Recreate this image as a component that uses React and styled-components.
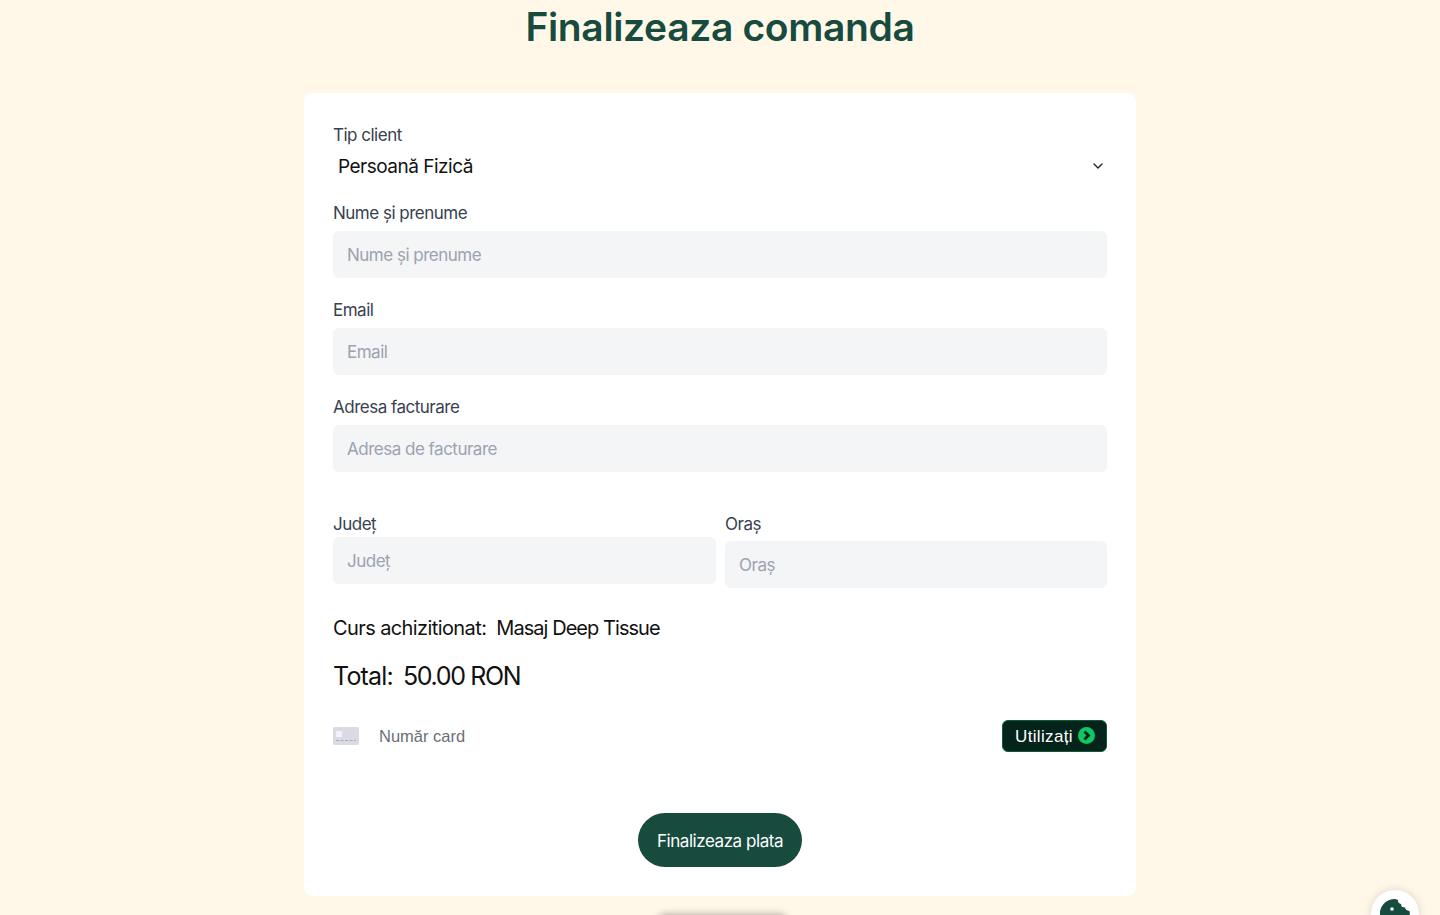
import React from 'react';
import styled, { createGlobalStyle } from 'styled-components';
import { ChevronDown } from 'lucide-react';

const GlobalStyle = createGlobalStyle`
  html, body {
    margin: 0;
    height: 100%;
    overflow: hidden;
    background: #fff8e9;
  }
  * {
    box-sizing: border-box;
  }
  body {
    font-family: Inter, "Noto Sans", sans-serif;
  }
`;

const Page = styled.div`
  height: 915px;
  overflow: hidden;
  position: relative;
  display: flex;
  flex-direction: column;
  align-items: center;
`;

const Title = styled.h1`
  margin: 0;
  height: 93px;
  padding-top: 3px;
  font-size: 39px;
  line-height: 48px;
  font-weight: 600;
  letter-spacing: -0.35px;
  color: #164b3e;
`;

const Card = styled.form`
  width: 832px;
  height: 803px;
  flex-shrink: 0;
  padding: 29px 29px 0;
  background: #fff;
  border-radius: 8px;
  display: flex;
  flex-direction: column;
`;

const Label = styled.label`
  display: block;
  height: 26px;
  font-size: 17px;
  line-height: 26px;
  letter-spacing: -0.5px;
  color: #374151;
`;

const SelectRow = styled.div`
  height: 36px;
  padding: 0 1px 0 5px;
  display: flex;
  align-items: center;
  justify-content: space-between;
  font-size: 19px;
  letter-spacing: -0.5px;
  color: #111;
  margin-bottom: 16px;

  svg {
    color: #222;
  }
`;

const Field = styled.div`
  margin-bottom: 19px;

  ${Label} {
    margin-bottom: 5px;
  }
`;

const Input = styled.input`
  display: block;
  width: 100%;
  height: 47px;
  padding: 0 14px;
  border: 0;
  border-radius: 6px;
  background: #f3f5f6;
  font-family: inherit;
  font-size: 17px;
  letter-spacing: -0.5px;
  outline: none;

  &::placeholder {
    color: #9ca3af;
    opacity: 1;
  }
`;

const Columns = styled.div`
  display: grid;
  grid-template-columns: 383px 382px;
  gap: 9px;
  margin-top: 20px;
`;

const ShiftedInput = styled(Input)`
  margin-top: ${(props) => props.$offset || 0}px;
`;

const CourseLine = styled.div`
  margin-top: 26px;
  display: flex;
  gap: 10px;
  font-size: 20px;
  line-height: 28px;
  letter-spacing: -0.6px;
  color: #111;
`;

const CourseName = styled.span`
  letter-spacing: -0.95px;
`;

const TotalLine = styled.div`
  margin-top: 17px;
  display: flex;
  gap: 10px;
  font-size: 25px;
  line-height: 34px;
  letter-spacing: -0.8px;
  color: #111;
`;

const TotalValue = styled.span`
  letter-spacing: -1.35px;
`;

const PaymentRow = styled.div`
  margin-top: 26px;
  height: 34px;
  display: flex;
  align-items: center;
  gap: 20px;
`;

const CardNumber = styled.span`
  flex: 1;
  font-family: "Liberation Sans", Arial, sans-serif;
  font-size: 16.5px;
  color: #6b6f76;
`;

const UseButton = styled.button`
  width: 105px;
  height: 32px;
  padding: 1px 0 0 12px;
  display: flex;
  align-items: center;
  gap: 5px;
  border: 1px solid #0b5a3a;
  border-radius: 6px;
  background: #04231a;
  color: #fff;
  font-family: "Liberation Sans", Arial, sans-serif;
  font-size: 17px;
  letter-spacing: 0.35px;

  svg {
    margin-top: -2px;
  }
`;

const Submit = styled.button`
  align-self: center;
  margin-top: 60px;
  width: 164px;
  height: 54px;
  padding: 2px 0 0;
  border: 0;
  border-radius: 27px;
  background: #164b3e;
  color: #fff;
  font-family: inherit;
  font-size: 17px;
  letter-spacing: -0.45px;
`;

const BottomGlow = styled.div`
  position: absolute;
  left: 660px;
  top: 916px;
  width: 125px;
  height: 10px;
  border-radius: 8px;
  background: #777;
  box-shadow: 0 0 7px 2px rgba(0, 0, 0, 0.3);
`;

const CookieBadge = styled.div`
  position: absolute;
  left: 1371px;
  top: 890px;
  width: 48px;
  height: 48px;
  border-radius: 50%;
  background: #fff;
  box-shadow: 0 0 10px rgba(0, 0, 0, 0.14);
  display: flex;
  justify-content: center;
  padding-top: 9px;
`;

const CardIcon = () => (
  <svg width="26" height="18" viewBox="0 0 26 18">
    <rect width="26" height="18" rx="2" fill="#d9dae3" />
    <rect x="3" y="4" width="6" height="6" rx="0.5" fill="#f1f1f6" />
    <path d="M3 13.5h20" stroke="#a9abb8" strokeWidth="1.2" strokeDasharray="3 1.5" />
  </svg>
);

const GoIcon = () => (
  <svg width="17" height="17" viewBox="0 0 17 17">
    <circle cx="8.5" cy="8.5" r="8.5" fill="#0fc763" />
    <path d="M6.4 4.4l4.1 4.1-4.1 4.1" fill="none" stroke="#04231a" strokeWidth="2.8" />
  </svg>
);

const CookieIcon = () => (
  <svg width="30" height="30" viewBox="0 0 30 30">
    <path
      d="M14 0Q16 0 18 1Q17.5 4 21 5Q21 8.5 25 8.5Q25.5 11.5 29.5 12A15 15 0 1 1 14 0Z"
      fill="#164b3e"
    />
    <circle cx="12" cy="10" r="1.8" fill="#fff" />
  </svg>
);

const textFields = [
  { label: 'Nume și prenume', placeholder: 'Nume și prenume' },
  { label: 'Email', placeholder: 'Email' },
  { label: 'Adresa facturare', placeholder: 'Adresa de facturare' },
];

const App = () => (
  <Page>
    <GlobalStyle />
    <Title>Finalizeaza comanda</Title>
    <Card>
      <Label>Tip client</Label>
      <SelectRow>
        <span>Persoană Fizică</span>
        <ChevronDown size={16} />
      </SelectRow>
      {textFields.map((field) => (
        <Field key={field.label}>
          <Label>{field.label}</Label>
          <Input placeholder={field.placeholder} />
        </Field>
      ))}
      <Columns>
        <div>
          <Label>Județ</Label>
          <Input placeholder="Județ" />
        </div>
        <div>
          <Label>Oraș</Label>
          <ShiftedInput $offset={4} placeholder="Oraș" />
        </div>
      </Columns>
      <CourseLine>
        <span>Curs achizitionat:</span>
        <CourseName>Masaj Deep Tissue</CourseName>
      </CourseLine>
      <TotalLine>
        <span>Total:</span>
        <TotalValue>50.00 RON</TotalValue>
      </TotalLine>
      <PaymentRow>
        <CardIcon />
        <CardNumber>Număr card</CardNumber>
        <UseButton type="button">
          Utilizați <GoIcon />
        </UseButton>
      </PaymentRow>
      <Submit type="button">Finalizeaza plata</Submit>
    </Card>
    <BottomGlow />
    <CookieBadge>
      <CookieIcon />
    </CookieBadge>
  </Page>
);

export default App;
